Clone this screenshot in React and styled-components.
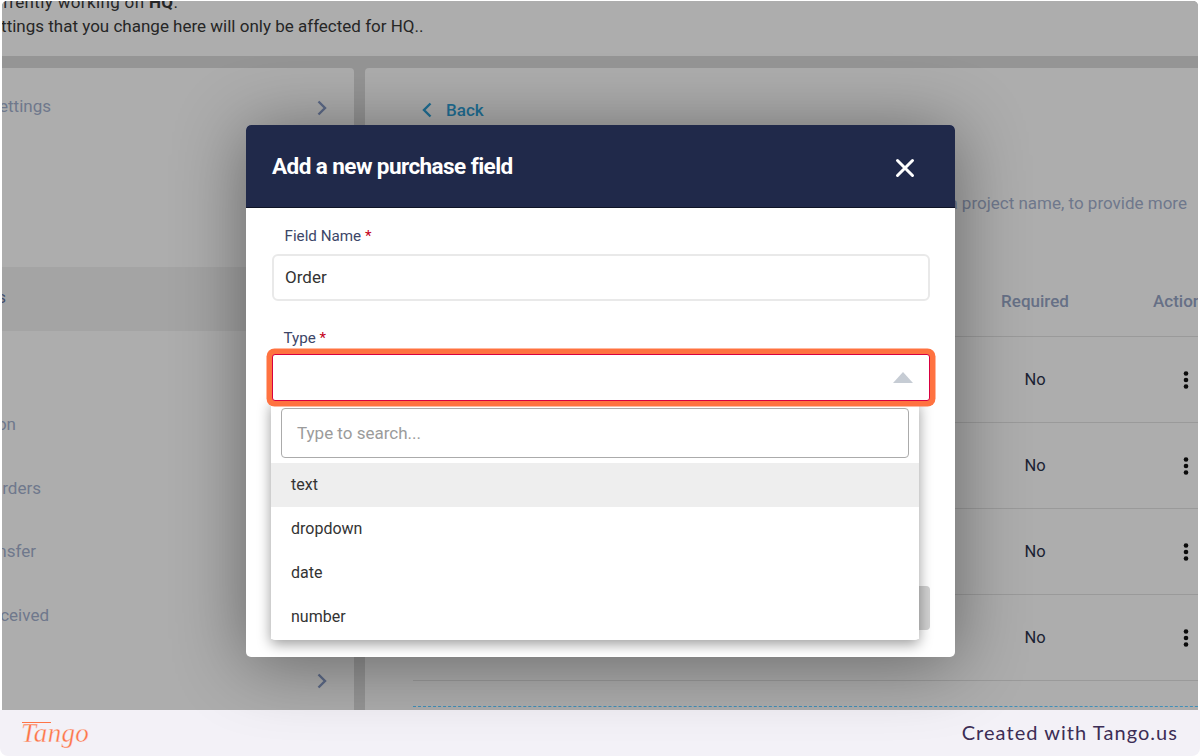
import React from 'react';
import styled, { createGlobalStyle } from 'styled-components';

const GlobalStyle = createGlobalStyle`
  html, body {
    margin: 0;
    padding: 0;
    background: #ffffff;
    font-family: Roboto, "Liberation Sans", sans-serif;
  }
`;

const Page = styled.div`
  position: relative;
  width: 1200px;
  height: 756px;
  overflow: hidden;
  display: flex;
  flex-direction: column;
`;

// the dimmed app behind the dialog
const Backdrop = styled.div`
  height: 709px;
  margin: 1px 2px 0;
  flex: none;
  overflow: hidden;
  display: flex;
  flex-direction: column;
  background: #959595;
  border-radius: 5px 5px 0 0;
`;

const Banner = styled.div`
  height: 55px;
  flex: none;
  overflow: hidden;
  background: #adadad;
  font-size: 17px;
  line-height: 24px;
  color: #262626;
  white-space: nowrap;

  p {
    margin: -11px 0 0 -20px;
    letter-spacing: 0.35px;
  }
  p + p {
    margin-top: 0;
    letter-spacing: 0;
  }
`;

const Columns = styled.div`
  flex: 1;
  min-height: 0;
  margin-top: 12px;
  display: flex;
  gap: 11px;
`;

const Sidebar = styled.div`
  width: 352px;
  flex: none;
  padding-top: 8px;
  box-sizing: border-box;
  background: #adadad;
  border-radius: 0 4px 0 0;
  overflow: hidden;
`;

const NavRow = styled.div`
  height: 63.65px;
  display: flex;
  align-items: center;
  justify-content: space-between;
  padding-right: 27px;
  background: ${(p) => (p.$active ? '#a4a4a4' : 'transparent')};
`;

const NavLabel = styled.div`
  width: ${(p) => p.$end}px;
  display: flex;
  justify-content: flex-end;
  white-space: nowrap;
  font-size: 17px;
  margin-top: -4px;
  color: ${(p) => (p.$active ? '#454f6c' : '#6f788c')};
`;

const Main = styled.div`
  flex: 1;
  min-width: 0;
  background: #adadad;
  border-radius: 4px 0 0 0;
  overflow: hidden;
  padding-left: 48px;
  display: flex;
  flex-direction: column;
`;

const BackLink = styled.div`
  margin: 30px 0 0 9px;
  height: 24px;
  display: flex;
  align-items: center;
  gap: 14px;
  font-size: 17px;
  font-weight: 500;
  color: #1f6f95;
`;

const Description = styled.div`
  margin-top: 69px;
  height: 24px;
  line-height: 24px;
  display: flex;
  justify-content: flex-end;
  padding-right: 11px;
  white-space: nowrap;
  font-size: 17px;
  color: #6f788c;
`;

const TableRow = styled.div`
  flex: none;
  height: ${(p) => p.$height}px;
  width: 830px;
  display: grid;
  grid-template-columns: 570px 104px 1fr;
  align-items: center;
  box-sizing: border-box;
  padding-top: ${(p) => p.$top || 0}px;
  border-bottom: 1px solid #9a9a9a;
`;

const HeadCell = styled.div`
  grid-column: ${(p) => p.$col};
  font-size: 17px;
  font-weight: 500;
  white-space: nowrap;
  color: #667086;
  text-align: ${(p) => (p.$col === 2 ? 'center' : 'left')};
  padding-left: ${(p) => (p.$col === 3 ? '66px' : '0')};
`;

const NoCell = styled.div`
  grid-column: 2;
  text-align: center;
  font-size: 16.5px;
  color: #1b2233;
`;

const MenuCell = styled.div`
  grid-column: 3;
  padding-left: 96px;
  display: flex;
`;

const DropZone = styled.div`
  margin-top: 25px;
  width: 830px;
  height: 0;
  border-top: 1px dashed #3f8fb8;
`;

const Footer = styled.div`
  flex: none;
  height: 46px;
  display: flex;
  align-items: center;
  justify-content: space-between;
  padding: 0 22px 0 21px;
  background: #f3f1f7;
  border-radius: 0 0 8px 8px;
`;

const TangoMark = styled.div`
  position: relative;
  font-family: "Liberation Serif", serif;
  font-style: italic;
  font-size: 27px;
  line-height: 36px;
  letter-spacing: 0.3px;
  color: #ff7446;
  -webkit-text-stroke: 0.35px #f3f1f7;

  &::before {
    content: '';
    position: absolute;
    left: 1px;
    top: 7px;
    width: 29px;
    height: 1px;
    background: #ff7446;
  }
`;

const CreatedWith = styled.div`
  margin-top: -2px;
  font-family: Lato, "Liberation Sans", sans-serif;
  font-size: 20px;
  letter-spacing: 1.05px;
  color: #3c2d55;
`;

// dialog floating over the app
const Modal = styled.div`
  position: absolute;
  left: 246px;
  top: 125px;
  width: 709px;
  height: 532px;
  background: #ffffff;
  border-radius: 5px;
  box-shadow: 0 6px 70px rgba(0, 0, 0, 0.42);
`;

const ModalHeader = styled.div`
  height: 83px;
  display: flex;
  align-items: center;
  justify-content: space-between;
  padding: 0 40px 0 26px;
  background: #20294a;
  border-radius: 5px 5px 0 0;
  border-bottom: 1px solid #0f1426;
  box-sizing: border-box;

  svg {
    margin-top: 3px;
  }
`;

const ModalTitle = styled.h2`
  margin: 0;
  font-size: 22.5px;
  font-weight: 700;
  letter-spacing: -0.57px;
  color: #ffffff;
`;

const ModalBody = styled.div`
  padding: 18px 25px 0 25.5px;
  display: flex;
  flex-direction: column;
`;

const FieldLabel = styled.label`
  height: 20px;
  line-height: 20px;
  margin-left: ${(p) => p.$indent}px;
  font-size: 15.2px;
  color: #3c4668;

  b {
    font-weight: 400;
    color: #c4001a;
  }
`;

const TextBox = styled.div`
  height: 47px;
  margin-top: 8px;
  margin-bottom: 27px;
  box-sizing: border-box;
  padding: 0 11.5px 2px;
  display: flex;
  align-items: center;
  border: 2px solid #e9e9e9;
  border-radius: 6px;
  font-size: 17px;
  color: #333333;
`;

const SelectWrap = styled.div`
  position: relative;
  margin-top: 6px;
`;

const SelectBox = styled.div`
  position: relative;
  z-index: 2;
  height: 47px;
  box-sizing: border-box;
  display: flex;
  align-items: center;
  justify-content: flex-end;
  padding-right: 16px;
  background: #ffffff;
  border: 1.5px solid #d8003f;
  border-radius: 3px;
  box-shadow: 0 0 0 5.5px #ff7240;
`;

const Caret = styled.span`
  width: 0;
  height: 0;
  border-left: 10px solid transparent;
  border-right: 10px solid transparent;
  border-bottom: 11px solid #c6ccd4;
`;

const Dropdown = styled.div`
  position: absolute;
  z-index: 1;
  left: -0.5px;
  top: 47px;
  width: 648px;
  padding: 7px 0 1px;
  box-sizing: border-box;
  background: #ffffff;
  border-radius: 0 0 4px 4px;
  box-shadow: 0 4px 14px rgba(0, 0, 0, 0.4);
`;

const SearchBox = styled.div`
  height: 50px;
  margin: 0 10px 5px;
  padding-left: 15px;
  box-sizing: border-box;
  display: flex;
  align-items: center;
  border: 1.5px solid #ababab;
  border-radius: 4px;
  font-size: 17px;
  color: #9b9b9b;
`;

const Option = styled.div`
  height: 44px;
  box-sizing: border-box;
  display: flex;
  align-items: center;
  padding: 0 0 2px 20px;
  font-size: 16px;
  color: #333333;
  background: ${(p) => (p.$active ? '#eeeeee' : '#ffffff')};
`;

const SaveButton = styled.div`
  align-self: flex-end;
  width: 120px;
  height: 44px;
  margin-top: 185px;
  background: #d1d1d1;
  border-radius: 4px;
`;

const CloseButton = () => (
  <svg width="20" height="20" viewBox="0 0 20 20" fill="none" stroke="#ffffff" strokeWidth="3" strokeLinecap="round">
    <path d="M2.5 2.5 L17.5 17.5 M17.5 2.5 L2.5 17.5" />
  </svg>
);

const Chevron = ({ left, color }) => (
  <svg width="10" height="16" viewBox="0 0 10 16" fill="none" stroke={color} strokeWidth="2.4">
    <path d={left ? 'M8.5 1.5 L2 8 L8.5 14.5' : 'M1.5 1.5 L8 8 L1.5 14.5'} />
  </svg>
);

const Dots = () => (
  <svg width="6" height="20" viewBox="0 0 6 20" fill="#0b0b0b">
    <circle cx="3" cy="3.5" r="2.3" />
    <circle cx="3" cy="10" r="2.3" />
    <circle cx="3" cy="16.5" r="2.3" />
  </svg>
);

const navItems = [
  { label: 'Purchase Settings', end: 49, chevron: true },
  {},
  {},
  { label: 'Purchase Fields', end: 4, active: true },
  {},
  { label: 'Configuration', end: 14 },
  { label: 'Purchase Orders', end: 39 },
  { label: 'Stock Transfer', end: 34 },
  { label: 'Goods Received', end: 47 },
  { chevron: true, last: true },
];

const App = () => {
  return (
    <Page>
      <GlobalStyle />
      <Backdrop>
        <Banner>
          <p>
            Currently working on <strong>HQ</strong>.
          </p>
          <p>Settings that you change here will only be affected for HQ..</p>
        </Banner>
        <Columns>
          <Sidebar>
            {navItems.map((item, i) => (
              <NavRow key={i} $active={item.active}>
                <NavLabel $end={item.end || 0} $active={item.active}>
                  {item.label}
                </NavLabel>
                {item.chevron && <Chevron color="#5d6a88" />}
              </NavRow>
            ))}
          </Sidebar>
          <Main>
            <BackLink>
              <Chevron left color="#1f6f95" />
              Back
            </BackLink>
            <Description>Add fields such as a project name, to provide more</Description>
            <TableRow $height={122} $top={50}>
              <HeadCell $col={2}>Required</HeadCell>
              <HeadCell $col={3}>Actions</HeadCell>
            </TableRow>
            {[0, 1, 2, 3].map((i) => (
              <TableRow key={i} $height={86}>
                <NoCell>No</NoCell>
                <MenuCell>
                  <Dots />
                </MenuCell>
              </TableRow>
            ))}
            <DropZone />
          </Main>
        </Columns>
      </Backdrop>
      <Footer>
        <TangoMark>Tango</TangoMark>
        <CreatedWith>Created with Tango.us</CreatedWith>
      </Footer>
      <Modal>
        <ModalHeader>
          <ModalTitle>Add a new purchase field</ModalTitle>
          <CloseButton />
        </ModalHeader>
        <ModalBody>
          <FieldLabel $indent={13}>
            Field Name <b>*</b>
          </FieldLabel>
          <TextBox>Order</TextBox>
          <FieldLabel $indent={12}>
            Type <b>*</b>
          </FieldLabel>
          <SelectWrap>
            <SelectBox>
              <Caret />
            </SelectBox>
            <Dropdown>
              <SearchBox>Type to search...</SearchBox>
              <Option $active>text</Option>
              <Option>dropdown</Option>
              <Option>date</Option>
              <Option>number</Option>
            </Dropdown>
          </SelectWrap>
          <SaveButton />
        </ModalBody>
      </Modal>
    </Page>
  );
};

export default App;
